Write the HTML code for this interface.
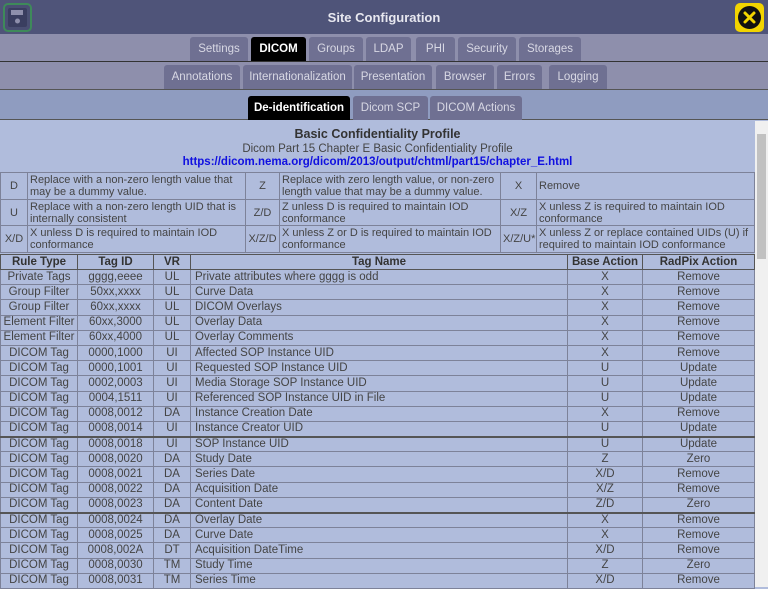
<!DOCTYPE html>
<html><head><meta charset="utf-8"><style>
*{box-sizing:border-box;margin:0;padding:0}
body{width:768px;height:587px;overflow:hidden;background:#b0bcdc;font-family:"Liberation Sans",sans-serif;position:relative}
.title{position:absolute;left:0;top:0;width:768px;height:34px;background:#4f5479;color:#e8e8f0;font-weight:bold;font-size:13px;text-align:center;line-height:36px}
.save{position:absolute;left:3px;top:3px;width:29px;height:29px;border:2px solid #3e8a5a;border-radius:5px;background:#4a4f73}
.close{position:absolute;left:735px;top:3px;width:29px;height:29px;background:#f2d400;border-radius:5px}
.close svg{position:absolute;left:3px;top:3px}
.row{position:absolute;left:0;width:768px}
.r1{top:34px;height:28px;background:#8e8fac;border-bottom:1px solid #333}
.r2{top:62px;height:28px;background:#8e8fac;border-bottom:1px solid #555}
.r3{top:90px;height:30px;background:#8f9cc0;border-bottom:1px solid #555}
.tab{position:absolute;top:3px;height:24px;background:#6f7092;color:#d8d8e4;font-size:11.5px;text-align:center;line-height:25px;border-radius:3px 3px 0 0}
.tab.on{background:#000;color:#fff;font-weight:bold}
.head{position:absolute;top:121px;left:0;width:755px;text-align:center;color:#444}
.sb{position:absolute;left:755px;top:121px;width:13px;height:466px;background:#f0f0f0}
.sb div{position:absolute;left:2px;top:13px;width:9px;height:125px;background:#c1c1c1}
table{border-collapse:collapse;position:absolute;left:0;width:755px;table-layout:fixed;color:#444;font-size:11.5px}
td,th{border:1px solid #7d8299;padding:0 2px;overflow:hidden;white-space:nowrap}
.def{font-size:11px}
.def td{height:26.7px;line-height:12px;white-space:normal;vertical-align:middle}
.def td.c{text-align:center}
.main td{height:15.2px;line-height:13px;text-align:center}
.main td.l{text-align:left;padding-left:4px}
.main th{height:15px;line-height:13px;color:#333;border-color:#555;border-width:1px}
.main tr.b td{border-top:2px solid #555}
</style></head><body>
<div class="title">Site Configuration</div>
<div class="save"><svg width="25" height="25" viewBox="0 0 25 25"><rect x="3" y="3" width="19" height="19" rx="2" fill="#3a3e60"/><rect x="6" y="5" width="12" height="5" fill="#8e8fac"/><circle cx="12.5" cy="16" r="2.5" fill="#8e8fac"/></svg></div>
<div class="close"><svg width="23" height="23" viewBox="0 0 23 23"><circle cx="11.5" cy="11.5" r="11.5" fill="#111"/><path d="M7 7L16 16M16 7L7 16" stroke="#f2d400" stroke-width="3" stroke-linecap="round"/></svg></div>
<div class="row r1">
<div class="tab" style="left:190px;width:58px">Settings</div>
<div class="tab on" style="left:251px;width:55px">DICOM</div>
<div class="tab" style="left:309px;width:54px">Groups</div>
<div class="tab" style="left:366px;width:45px">LDAP</div>
<div class="tab" style="left:416px;width:39px">PHI</div>
<div class="tab" style="left:458px;width:58px">Security</div>
<div class="tab" style="left:519px;width:62px">Storages</div>
</div>
<div class="row r2">
<div class="tab" style="left:164px;width:76px">Annotations</div>
<div class="tab" style="left:243px;width:109px">Internationalization</div>
<div class="tab" style="left:354px;width:78px">Presentation</div>
<div class="tab" style="left:436px;width:58px">Browser</div>
<div class="tab" style="left:497px;width:45px">Errors</div>
<div class="tab" style="left:549px;width:58px">Logging</div>
</div>
<div class="row r3">
<div class="tab on" style="left:248px;top:6px;width:102px">De-identification</div>
<div class="tab" style="left:353px;top:6px;width:75px">Dicom SCP</div>
<div class="tab" style="left:430px;top:6px;width:92px">DICOM Actions</div>
</div>
<div class="head">
<div style="font-weight:bold;font-size:12.5px;color:#333;margin-top:6px">Basic Confidentiality Profile</div>
<div style="font-size:11.5px;margin-top:2px">Dicom Part 15 Chapter E Basic Confidentiality Profile</div>
<div style="font-size:11.5px;margin-top:1px;color:#1010e0;font-weight:bold">https://dicom.nema.org/dicom/2013/output/chtml/part15/chapter_E.html</div>
</div>
<table class="def" style="top:172px">
<colgroup><col style="width:27px"><col style="width:218px"><col style="width:34px"><col style="width:221px"><col style="width:36px"><col></colgroup>
<tr><td class="c">D</td><td>Replace with a non-zero length value that may be a dummy value.</td><td class="c">Z</td><td>Replace with zero length value, or non-zero length value that may be a dummy value.</td><td class="c">X</td><td>Remove</td></tr>
<tr><td class="c">U</td><td>Replace with a non-zero length UID that is internally consistent</td><td class="c">Z/D</td><td>Z unless D is required to maintain IOD conformance</td><td class="c">X/Z</td><td>X unless Z is required to maintain IOD conformance</td></tr>
<tr><td class="c">X/D</td><td>X unless D is required to maintain IOD conformance</td><td class="c">X/Z/D</td><td>X unless Z or D is required to maintain IOD conformance</td><td class="c">X/Z/U*</td><td>X unless Z or replace contained UIDs (U) if required to maintain IOD conformance</td></tr>
</table>
<table class="main" style="top:254px">
<colgroup><col style="width:77px"><col style="width:76px"><col style="width:37px"><col style="width:377px"><col style="width:75px"><col></colgroup>
<tr><th>Rule Type</th><th>Tag ID</th><th>VR</th><th>Tag Name</th><th>Base Action</th><th>RadPix Action</th></tr>
<tr><td>Private Tags</td><td>gggg,eeee</td><td>UL</td><td class="l">Private attributes where gggg is odd</td><td>X</td><td>Remove</td></tr>
<tr><td>Group Filter</td><td>50xx,xxxx</td><td>UL</td><td class="l">Curve Data</td><td>X</td><td>Remove</td></tr>
<tr><td>Group Filter</td><td>60xx,xxxx</td><td>UL</td><td class="l">DICOM Overlays</td><td>X</td><td>Remove</td></tr>
<tr><td>Element Filter</td><td>60xx,3000</td><td>UL</td><td class="l">Overlay Data</td><td>X</td><td>Remove</td></tr>
<tr><td>Element Filter</td><td>60xx,4000</td><td>UL</td><td class="l">Overlay Comments</td><td>X</td><td>Remove</td></tr>
<tr><td>DICOM Tag</td><td>0000,1000</td><td>UI</td><td class="l">Affected SOP Instance UID</td><td>X</td><td>Remove</td></tr>
<tr><td>DICOM Tag</td><td>0000,1001</td><td>UI</td><td class="l">Requested SOP Instance UID</td><td>U</td><td>Update</td></tr>
<tr><td>DICOM Tag</td><td>0002,0003</td><td>UI</td><td class="l">Media Storage SOP Instance UID</td><td>U</td><td>Update</td></tr>
<tr><td>DICOM Tag</td><td>0004,1511</td><td>UI</td><td class="l">Referenced SOP Instance UID in File</td><td>U</td><td>Update</td></tr>
<tr><td>DICOM Tag</td><td>0008,0012</td><td>DA</td><td class="l">Instance Creation Date</td><td>X</td><td>Remove</td></tr>
<tr><td>DICOM Tag</td><td>0008,0014</td><td>UI</td><td class="l">Instance Creator UID</td><td>U</td><td>Update</td></tr>
<tr class="b"><td>DICOM Tag</td><td>0008,0018</td><td>UI</td><td class="l">SOP Instance UID</td><td>U</td><td>Update</td></tr>
<tr><td>DICOM Tag</td><td>0008,0020</td><td>DA</td><td class="l">Study Date</td><td>Z</td><td>Zero</td></tr>
<tr><td>DICOM Tag</td><td>0008,0021</td><td>DA</td><td class="l">Series Date</td><td>X/D</td><td>Remove</td></tr>
<tr><td>DICOM Tag</td><td>0008,0022</td><td>DA</td><td class="l">Acquisition Date</td><td>X/Z</td><td>Remove</td></tr>
<tr><td>DICOM Tag</td><td>0008,0023</td><td>DA</td><td class="l">Content Date</td><td>Z/D</td><td>Zero</td></tr>
<tr class="b"><td>DICOM Tag</td><td>0008,0024</td><td>DA</td><td class="l">Overlay Date</td><td>X</td><td>Remove</td></tr>
<tr><td>DICOM Tag</td><td>0008,0025</td><td>DA</td><td class="l">Curve Date</td><td>X</td><td>Remove</td></tr>
<tr><td>DICOM Tag</td><td>0008,002A</td><td>DT</td><td class="l">Acquisition DateTime</td><td>X/D</td><td>Remove</td></tr>
<tr><td>DICOM Tag</td><td>0008,0030</td><td>TM</td><td class="l">Study Time</td><td>Z</td><td>Zero</td></tr>
<tr><td>DICOM Tag</td><td>0008,0031</td><td>TM</td><td class="l">Series Time</td><td>X/D</td><td>Remove</td></tr>
</table>
<div class="sb"><div></div></div>
</body></html>
